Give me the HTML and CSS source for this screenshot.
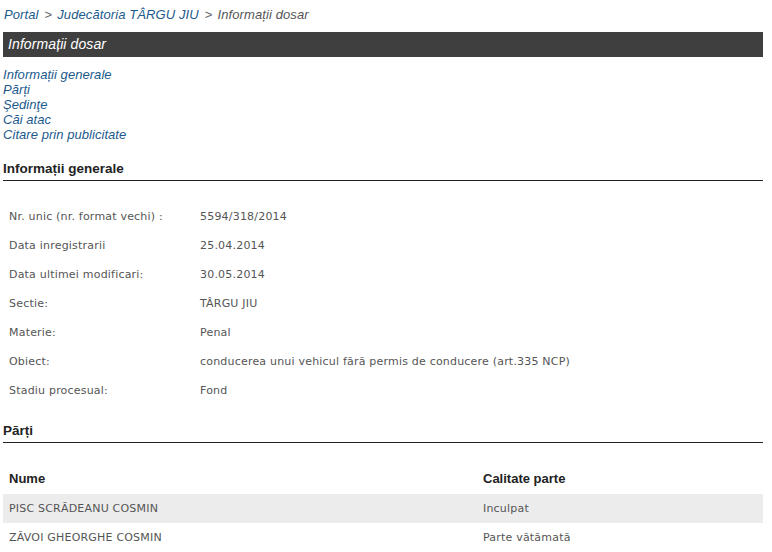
FILE: index.html
```html
<!DOCTYPE html>
<html lang="ro">
<head>
<meta charset="utf-8">
<title>Informații dosar</title>
<link rel="stylesheet" href="styles.css">
</head>
<body>
<div class="page">
  <div class="breadcrumb">
    <a href="#">Portal</a><span class="sep">&gt;</span><a href="#">Judecătoria TÂRGU JIU</a><span class="sep">&gt;</span><span class="current">Informații dosar</span>
  </div>
  <div class="titlebar">Informații dosar</div>
  <ul class="toc">
    <li><a href="#">Informații generale</a></li>
    <li><a href="#">Părți</a></li>
    <li><a href="#">Şedinţe</a></li>
    <li><a href="#">Căi atac</a></li>
    <li><a href="#">Citare prin publicitate</a></li>
  </ul>
  <h2 class="section">Informații generale</h2>
  <div class="info">
    <div class="row"><span class="label">Nr. unic (nr. format vechi) :</span><span class="value">5594/318/2014</span></div>
    <div class="row"><span class="label">Data inregistrarii</span><span class="value">25.04.2014</span></div>
    <div class="row"><span class="label">Data ultimei modificari:</span><span class="value">30.05.2014</span></div>
    <div class="row"><span class="label">Sectie:</span><span class="value">TÂRGU JIU</span></div>
    <div class="row"><span class="label">Materie:</span><span class="value">Penal</span></div>
    <div class="row"><span class="label">Obiect:</span><span class="value">conducerea unui vehicul fără permis de conducere (art.335 NCP)</span></div>
    <div class="row"><span class="label">Stadiu procesual:</span><span class="value">Fond</span></div>
  </div>
  <h2 class="section parti">Părți</h2>
  <div class="parties">
    <div class="prow head"><span>Nume</span><span>Calitate parte</span></div>
    <div class="prow alt"><span>PISC SCRĂDEANU COSMIN</span><span>Inculpat</span></div>
    <div class="prow"><span>ZĂVOI GHEORGHE COSMIN</span><span>Parte vătămată</span></div>
  </div>
</div>
</body>
</html>
```
FILE: styles.css
```css
html, body {
  margin: 0;
  padding: 0;
  background: #fff;
}
.page {
  padding: 0 9px 0 3px;
  font-family: "DejaVu Sans", Verdana, sans-serif;
  font-size: 11px;
  letter-spacing: 0.2px;
  color: #555;
}
.breadcrumb {
  font-family: "Liberation Sans", Arial, sans-serif;
  font-style: italic;
  font-size: 13px;
  letter-spacing: 0.1px;
  line-height: 16px;
  padding: 7px 0 0 1px;
  height: 32px;
  box-sizing: border-box;
  color: #555;
}
.breadcrumb a {
  color: #1c5a8c;
  text-decoration: none;
}
.breadcrumb .sep {
  font-style: normal;
  margin: 0 5px 0 6px;
  color: #666;
}
.titlebar {
  height: 25px;
  background: #3f3f3f;
  color: #fff;
  font-family: "Liberation Sans", Arial, sans-serif;
  font-style: italic;
  font-size: 14px;
  letter-spacing: 0.1px;
  line-height: 24px;
  padding-left: 5px;
}
.toc {
  list-style: none;
  margin: 0;
  padding: 10px 0 0 0;
  font-family: "Liberation Sans", Arial, sans-serif;
  font-style: italic;
  font-size: 13px;
  letter-spacing: 0.05px;
  line-height: 15px;
}
.toc a {
  color: #1c5a8c;
  text-decoration: none;
}
.section {
  margin: 19px 0 0 0;
  font-family: "Liberation Sans", Arial, sans-serif;
  font-weight: bold;
  font-size: 13.5px;
  letter-spacing: 0;
  line-height: 16px;
  color: #222;
  padding-bottom: 3px;
  border-bottom: 1px solid #222;
}
.info {
  padding: 21px 0 0 6px;
}
.row {
  display: grid;
  grid-template-columns: 191px 1fr;
  height: 29px;
  line-height: 29px;
}
.section.parti {
  margin-top: 18px;
}
.parties {
  padding-top: 22px;
}
.prow {
  display: grid;
  grid-template-columns: 474px 1fr;
  height: 29px;
  line-height: 29px;
  padding-left: 6px;
}
.prow.head {
  font-family: "Liberation Sans", Arial, sans-serif;
  font-weight: bold;
  font-size: 13px;
  letter-spacing: 0;
  line-height: 27px;
  color: #222;
}
.prow.alt {
  background: #ececec;
}
```
